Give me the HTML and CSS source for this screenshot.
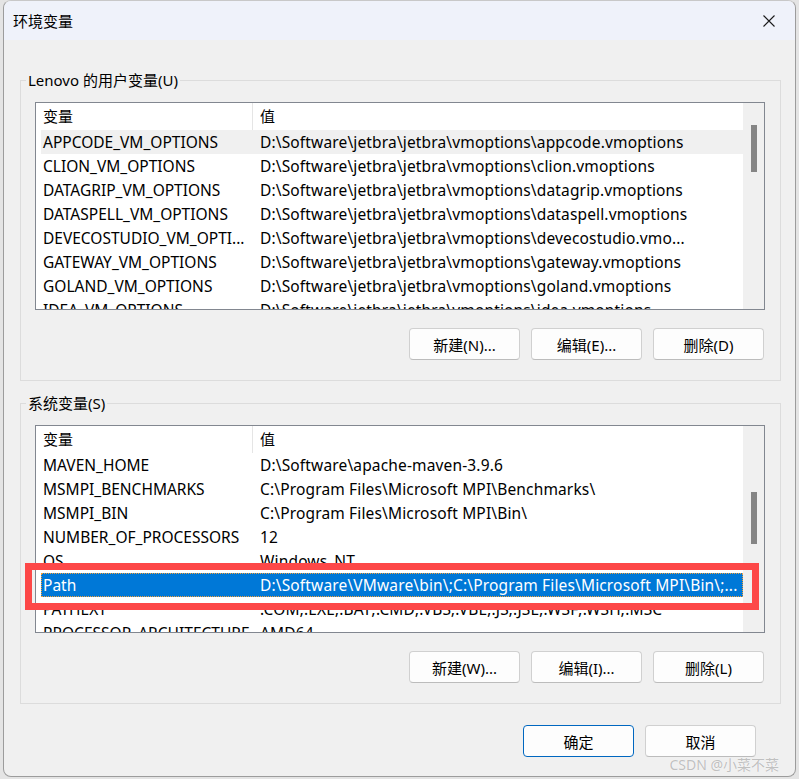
FILE: index.html
```html
<!DOCTYPE html>
<html lang="zh-CN">
<head>
    <meta charset="UTF-8">
    <title>环境变量</title>
    <link rel="stylesheet" href="styles.css">
</head>
<body>
    <div class="dialog">
        <div class="titlebar">
            <span class="title">环境变量</span>
            <button class="close" aria-label="关闭">
                <svg width="12" height="12" viewBox="0 0 12 12"><path d="M0.5 0.5L11.5 11.5M11.5 0.5L0.5 11.5" stroke="#1b1b1b" stroke-width="1.1" fill="none"/></svg>
            </button>
        </div>

        <div class="content">
            <fieldset class="group">
                <legend>Lenovo 的用户变量(U)</legend>
                <div class="list">
                    <div class="list-main">
                        <div class="list-head">
                            <div class="col-name">变量</div>
                            <div class="col-value">值</div>
                        </div>
                        <div class="list-rows">
                            <div class="row hover"><div class="col-name">APPCODE_VM_OPTIONS</div><div class="col-value">D:\Software\jetbra\jetbra\vmoptions\appcode.vmoptions</div></div>
                            <div class="row"><div class="col-name">CLION_VM_OPTIONS</div><div class="col-value">D:\Software\jetbra\jetbra\vmoptions\clion.vmoptions</div></div>
                            <div class="row"><div class="col-name">DATAGRIP_VM_OPTIONS</div><div class="col-value">D:\Software\jetbra\jetbra\vmoptions\datagrip.vmoptions</div></div>
                            <div class="row"><div class="col-name">DATASPELL_VM_OPTIONS</div><div class="col-value">D:\Software\jetbra\jetbra\vmoptions\dataspell.vmoptions</div></div>
                            <div class="row"><div class="col-name">DEVECOSTUDIO_VM_OPTI...</div><div class="col-value">D:\Software\jetbra\jetbra\vmoptions\devecostudio.vmo...</div></div>
                            <div class="row"><div class="col-name">GATEWAY_VM_OPTIONS</div><div class="col-value">D:\Software\jetbra\jetbra\vmoptions\gateway.vmoptions</div></div>
                            <div class="row"><div class="col-name">GOLAND_VM_OPTIONS</div><div class="col-value">D:\Software\jetbra\jetbra\vmoptions\goland.vmoptions</div></div>
                            <div class="row"><div class="col-name">IDEA_VM_OPTIONS</div><div class="col-value">D:\Software\jetbra\jetbra\vmoptions\idea.vmoptions</div></div>
                        </div>
                    </div>
                    <div class="scrollbar"><div class="thumb thumb-user"></div></div>
                </div>
                <div class="btn-row">
                    <button class="btn">新建(N)...</button>
                    <button class="btn">编辑(E)...</button>
                    <button class="btn">删除(D)</button>
                </div>
            </fieldset>

            <fieldset class="group group-system">
                <legend>系统变量(S)</legend>
                <div class="list">
                    <div class="list-main">
                        <div class="list-head">
                            <div class="col-name">变量</div>
                            <div class="col-value">值</div>
                        </div>
                        <div class="list-rows">
                            <div class="row"><div class="col-name">MAVEN_HOME</div><div class="col-value">D:\Software\apache-maven-3.9.6</div></div>
                            <div class="row"><div class="col-name">MSMPI_BENCHMARKS</div><div class="col-value">C:\Program Files\Microsoft MPI\Benchmarks\</div></div>
                            <div class="row"><div class="col-name">MSMPI_BIN</div><div class="col-value">C:\Program Files\Microsoft MPI\Bin\</div></div>
                            <div class="row"><div class="col-name">NUMBER_OF_PROCESSORS</div><div class="col-value">12</div></div>
                            <div class="row"><div class="col-name">OS</div><div class="col-value">Windows_NT</div></div>
                            <div class="row selected"><div class="col-name">Path</div><div class="col-value">D:\Software\VMware\bin\;C:\Program Files\Microsoft MPI\Bin\;...</div></div>
                            <div class="row"><div class="col-name">PATHEXT</div><div class="col-value">.COM;.EXE;.BAT;.CMD;.VBS;.VBE;.JS;.JSE;.WSF;.WSH;.MSC</div></div>
                            <div class="row"><div class="col-name">PROCESSOR_ARCHITECTURE</div><div class="col-value">AMD64</div></div>
                        </div>
                    </div>
                    <div class="scrollbar"><div class="thumb thumb-system"></div></div>
                    <!-- 红框标注 Path 这一行 -->
                    <div class="mark"></div>
                </div>
                <div class="btn-row">
                    <button class="btn">新建(W)...</button>
                    <button class="btn">编辑(I)...</button>
                    <button class="btn">删除(L)</button>
                </div>
            </fieldset>

            <div class="footer">
                <button class="btn btn-primary">确定</button>
                <button class="btn">取消</button>
            </div>
        </div>

        <div class="watermark">CSDN @小菜不菜</div>
    </div>
</body>
</html>
```

FILE: styles.css
```css
* {
    box-sizing: border-box;
    margin: 0;
    padding: 0;
}

body {
    width: 799px;
    height: 779px;
    background-color: #e4e4e4;
    font-family: "Noto Sans", "Noto Sans CJK SC", sans-serif;
    font-size: 15px;
    color: #000;
    overflow: hidden;
}

.dialog {
    position: relative;
    width: 793px;
    height: 777px;
    margin-left: 3px;
    background-color: #f0f0f0;
    border: 1px solid #9c9c9c;
    border-top-color: #c8c8c8;
    border-radius: 8px;
    overflow: hidden;
}

.titlebar {
    height: 39px;
    display: flex;
    align-items: center;
    justify-content: space-between;
    background-color: #eff2fa;
    padding-left: 9px;
}

.title {
    font-size: 15px;
    line-height: 20px;
}

.close {
    width: 46px;
    height: 38px;
    border: none;
    background: none;
    display: flex;
    align-items: center;
    justify-content: center;
    margin-right: 3px;
}

.content {
    padding: 30px 14px 0 16px;
}

.group {
    min-width: 0;
    border: 1px solid #dcdcdc;
    padding: 12px 15px 20px 14px;
}

.group legend {
    margin-left: -9px;
    padding: 0 2px;
    font-size: 15px;
    line-height: 20px;
}

.group-system {
    margin-top: 12px;
}

.list {
    position: relative;
    height: 208px;
    display: flex;
    border: 1px solid #828790;
    background-color: #fff;
}

.list-main {
    flex: 1;
    min-width: 0;
    overflow: hidden;
}

.list-head {
    display: flex;
    height: 27px;
    line-height: 27px;
}

.list-head .col-name {
    padding-left: 7px;
    width: 217px;
    border-right: 1px solid #e5e5e5;
}

.list-rows {
    padding-left: 5px;
}

.row {
    display: flex;
    height: 24px;
    padding-top: 1px;
    line-height: 23px;
    white-space: nowrap;
    font-size: 15.5px;
}

.row .col-name {
    width: 212px;
    flex-shrink: 0;
    padding-left: 2px;
    overflow: hidden;
}

.col-value {
    flex: 1;
    min-width: 0;
    padding-left: 7px;
    padding-right: 1px;
    overflow: hidden;
    text-overflow: ellipsis;
    white-space: nowrap;
    letter-spacing: 0.15px;
}

.row.hover {
    background-color: #f0f0f0;
}

.row.selected {
    background-color: #0078d7;
    color: #fff;
    outline: 1px dotted #f3a13b;
    outline-offset: -1px;
}

.scrollbar {
    width: 21px;
    flex-shrink: 0;
    background-color: #f0f0f0;
    position: relative;
}

.thumb {
    position: absolute;
    left: 8px;
    width: 6px;
    background-color: #858585;
}

.thumb-user {
    top: 22px;
    height: 47px;
}

.thumb-system {
    top: 66px;
    height: 52px;
}

.mark {
    position: absolute;
    left: -11px;
    top: 137px;
    width: 734px;
    height: 47px;
    border: 7px solid #fd4848;
}

.btn-row {
    display: flex;
    justify-content: flex-end;
    gap: 11px;
    margin-top: 18px;
    padding-right: 1px;
}

.btn {
    width: 111px;
    height: 32px;
    background-color: #fdfdfd;
    border: 1px solid #d0d0d0;
    border-bottom-color: #bcbcbc;
    border-radius: 4px;
    font-family: "Noto Sans", "Noto Sans CJK SC", sans-serif;
    font-size: 15px;
    color: #000;
}

.btn-primary {
    border-color: #0067c0;
}

.footer {
    display: flex;
    justify-content: flex-end;
    gap: 11px;
    margin-top: 21px;
    padding-right: 25px;
}

.watermark {
    position: absolute;
    right: 16px;
    bottom: 2px;
    font-size: 14px;
    color: rgba(140, 140, 140, 0.55);
    text-shadow: 0 0 1px #fff;
}
```
